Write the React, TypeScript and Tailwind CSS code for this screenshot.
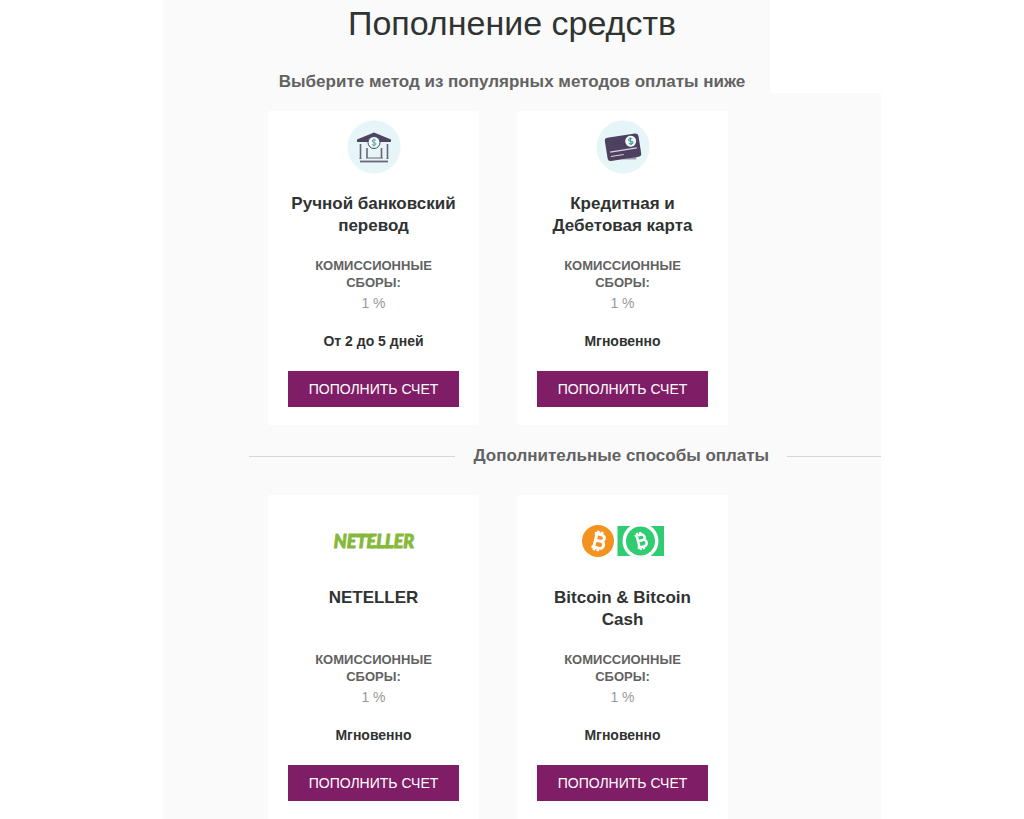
import type { ReactNode } from "react";

function BankIcon() {
  return (
    <svg viewBox="0 0 54 54" className="size-[54px]" aria-hidden="true">
      <circle cx="27" cy="27" r="26.5" fill="#e6f5f7" />
      <path d="M10 19.500 27 12.500l17 7v2.500H10z" fill="#4d4460" />
      <g fill="none" stroke="#6b6379" strokeWidth="1.600">
        <path d="M13.500 24v14.500M40.500 24v14.500M20 28v10M34.500 28v10" />
        <path d="M19 38h17M12.500 38.500h2M39.500 38.500h2" strokeWidth="1" />
        <path d="M13 41.500h28" strokeWidth="1.800" />
      </g>
      <circle cx="27" cy="22.500" r="6" fill="#f4fbfc" stroke="#4d4460" strokeWidth="1" />
      <path
        d="M29 20.500c-.6-1-3.900-1.100-3.900.5 0 1.900 4 1.100 4 3 0 1.700-3.500 1.600-4.200.4M27 18.500v8"
        fill="none"
        stroke="#55a3a6"
        strokeWidth="1"
      />
    </svg>
  );
}

function CardIcon() {
  return (
    <svg viewBox="0 0 54 54" className="size-[54px]" aria-hidden="true">
      <circle cx="27" cy="27" r="26.500" fill="#e6f5f7" />
      <path d="m26 39.500 14.500-3.500v2q0 1.500-1.500 1.500z" fill="#a09cab" />
      <g transform="rotate(-9 27 27)">
        <rect x="10" y="15.500" width="34" height="23.500" rx="3" fill="#4d4060" />
        <path d="M13.500 30h27M13.500 34.500h13" stroke="#d9d6df" strokeWidth="1.200" />
        <circle cx="35.500" cy="22.500" r="5.500" fill="#f4fbfc" />
        <path
          d="M37.500 20.500c-.6-1-3.900-1.100-3.900.5 0 1.900 4 1.100 4 3 0 1.700-3.500 1.600-4.200.4M35.500 18.500v8"
          fill="none"
          stroke="#3f9c98"
          strokeWidth="1.100"
        />
      </g>
    </svg>
  );
}

function NetellerLogo() {
  return (
    <svg viewBox="0 0 100 30" className="h-[30px] w-[100px]" role="img" aria-label="NETELLER">
      <text
        x="50"
        y="22"
        textAnchor="middle"
        fill="#86b83b"
        stroke="#86b83b"
        strokeWidth="0.900"
        className="font-[Lato,sans-serif] text-[18px] font-black italic"
      >
        NETELLER
      </text>
      <path d="M28 8.500h22l-.7 3H27.300zM48 19.300h22l-.7 3H47.300z" fill="#86b83b" />
    </svg>
  );
}

const bitcoinGlyph =
  "M-4-5.500H1.500C5-5.500 5.500-1 2.500-.4 6.500.2 5.800 5.500 1.800 5.500H-4M-2.200-5.500v11M-2-.3h4.500M-1.500-8v2.500M1.500-8v2.500M-1.500 5.500V8M1.500 5.500V8";

function BitcoinLogos() {
  return (
    <svg viewBox="0 0 84 34" className="h-[34px] w-[84px]" role="img" aria-label="Bitcoin, Bitcoin Cash">
      <circle cx="17" cy="17" r="16" fill="#f4921f" />
      <path
        d={bitcoinGlyph}
        transform="translate(17 17) rotate(14) scale(1.250)"
        fill="none"
        stroke="#fff"
        strokeWidth="2.300"
      />
      <path d="M36.500 2H83v30H36.500z" fill="#2fcc71" />
      <circle cx="59.500" cy="17" r="18" fill="#fff" />
      <path d="M36.500-2H83v4H36.500zM36.500 32H83v3H36.500z" fill="#fff" />
      <circle cx="59.500" cy="17" r="14.500" fill="#2fcc71" />
      <path
        d={bitcoinGlyph}
        transform="translate(59.500 17) rotate(-14) scale(1.100)"
        fill="none"
        stroke="#fff"
        strokeWidth="2.200"
      />
    </svg>
  );
}

type Method = { title: string; time: string; logo: ReactNode };

const popular: Method[] = [
  { title: "Ручной банковский перевод", time: "От 2 до 5 дней", logo: <BankIcon /> },
  { title: "Кредитная и Дебетовая карта", time: "Мгновенно", logo: <CardIcon /> },
];

const additional: Method[] = [
  { title: "NETELLER", time: "Мгновенно", logo: <NetellerLogo /> },
  { title: "Bitcoin & Bitcoin Cash", time: "Мгновенно", logo: <BitcoinLogos /> },
];

function MethodCard({ method, tall }: { method: Method; tall?: boolean }) {
  return (
    <article className="flex flex-col items-center bg-white px-5 pb-[18px] text-center">
      <div className={tall ? "flex h-[92px] items-center" : "flex h-[82px] items-start pt-[9px]"}>
        {method.logo}
      </div>
      <h3 className="min-h-11 w-full text-[17px] leading-[22px] font-bold text-[#2f3332]">{method.title}</h3>
      <p className="mt-5 w-[130px] text-[13px] leading-[17px] font-bold text-[#626262] uppercase">
        Комиссионные сборы:
      </p>
      <p className="mt-0.5 text-sm leading-5 text-[#999999]">1 %</p>
      <p className="mt-[18px] text-sm leading-5 font-bold text-[#2f3332]">{method.time}</p>
      <button type="button" className="mt-5 h-9 w-full bg-[#7f1d66] text-sm text-white uppercase">
        Пополнить счет
      </button>
    </article>
  );
}

function MethodList({ methods, tall }: { methods: Method[]; tall?: boolean }) {
  return (
    <div className="ml-[19px] grid max-w-[460px] grid-cols-2 gap-[38px]">
      {methods.map((m) => (
        <MethodCard key={m.title} method={m} tall={tall} />
      ))}
    </div>
  );
}

export default function App() {
  return (
    <div className="bg-white pl-5 font-['Liberation_Sans',Arial,sans-serif]">
      <main className="mx-auto max-w-[718px]">
        <header className="mr-[111px] bg-[#fafafa] pt-[2px] pl-[91px] text-center">
          <h1 className="text-[34px] leading-[42px] text-[#2f3332]">Пополнение средств</h1>
          <p className="pt-7 pb-[1px] text-[17px] leading-5 font-bold text-[#626262]">
            Выберите метод из популярных методов оплаты ниже
          </p>
        </header>
        <div className="bg-[#fafafa] pt-[18px] pl-[86px]">
          <MethodList methods={popular} />
          <div className="flex items-center gap-[18px] pt-[21px] pb-[29px]">
            <span className="h-px flex-[209] bg-[#d6d6d6]" />
            <h2 className="text-[17px] leading-5 font-bold text-[#626262]">Дополнительные способы оплаты</h2>
            <span className="h-px flex-[95] bg-[#d6d6d6]" />
          </div>
          <MethodList methods={additional} tall />
        </div>
      </main>
    </div>
  );
}
